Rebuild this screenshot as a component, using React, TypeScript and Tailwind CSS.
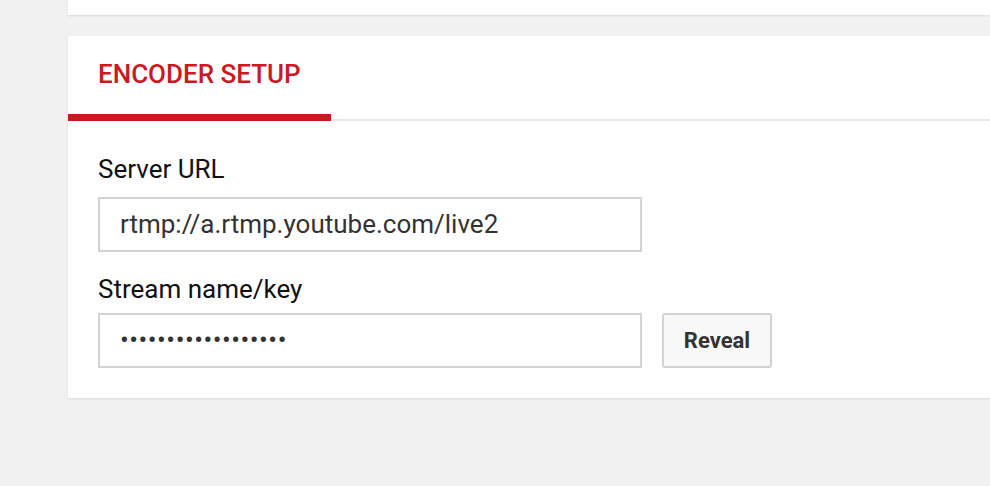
import React from 'react';

const App: React.FC = () => {
  return (
    <div className="min-h-[486px] bg-[#f1f1f1] pl-[68px] font-['Roboto',sans-serif] overflow-hidden">
      <div className="h-[15px] bg-white shadow-[0_1px_2px_rgba(0,0,0,0.1)]" />

      <div className="mt-[21px] bg-white shadow-[0_1px_2px_rgba(0,0,0,0.1)]">
        <div className="flex border-b-2 border-[#e8e8e8]">
          <div className="px-[30px] pt-[23px] pb-[24px] border-b-[7px] border-[#cc181e] -mb-[2px] text-[26px] leading-[31px] font-medium text-[#cc181e]">
            ENCODER SETUP
          </div>
        </div>

        <div className="px-[30px] pt-[34px] pb-[30px]">
          <label className="block text-[26px] leading-[28px] text-[#111]">Server URL</label>
          <div className="mt-[14px] w-[544px] h-[55px] border-2 border-[#d3d3d3] px-[20px] flex items-center text-[26px] text-[#333]">
            rtmp://a.rtmp.youtube.com/live2
          </div>

          <label className="block mt-[23px] text-[26px] leading-[28px] text-[#111]">Stream name/key</label>
          <div className="mt-[10px] flex gap-[20px]">
            <div className="w-[544px] h-[55px] border-2 border-[#d3d3d3] px-[20px] flex items-center text-[26px] text-[#333] tracking-[0.5px]">
              ••••••••••••••••••
            </div>
            <button className="w-[110px] h-[55px] border-2 border-[#d3d3d3] rounded-[3px] bg-[#f8f8f8] text-[22px] font-bold text-[#333]">
              Reveal
            </button>
          </div>
        </div>
      </div>
    </div>
  );
};

export default App;
